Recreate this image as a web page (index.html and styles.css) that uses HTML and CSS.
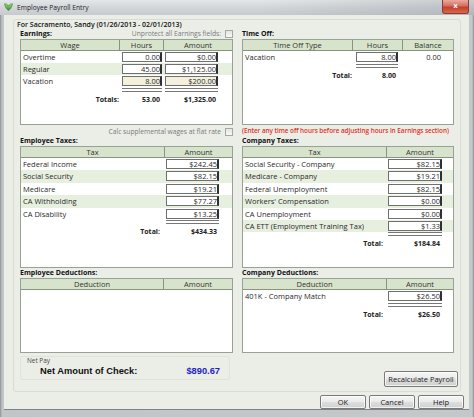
FILE: index.html
```html
<!DOCTYPE html>
<html>
<head>
<meta charset="utf-8">
<title>Employee Payroll Entry</title>
<link rel="stylesheet" href="styles.css">
</head>
<body>
<div class="window">
  <div class="titlebar">
    <svg class="app-icon" width="9" height="8" viewBox="0 0 9 8">
      <defs><linearGradient id="lg" x1="0" y1="0" x2="0" y2="1"><stop offset="0" stop-color="#9fe07a"/><stop offset="1" stop-color="#2f8a1c"/></linearGradient></defs>
      <path d="M0.5 0.8 C2 0.6 3.5 1.4 4.5 3 C5.5 1.4 7 0.6 8.5 0.8 C8 3.8 6.5 6.2 4.5 7.6 C2.5 6.2 1 3.8 0.5 0.8 Z" fill="url(#lg)" stroke="#2a6e1a" stroke-width="0.5"/>
    </svg>
    <span class="title">Employee Payroll Entry</span>
    <div class="close">x</div>
  </div>
  <div class="frame">
    <div class="client">
      <div class="panel">
        <div class="heading">For Sacramento, Sandy (01/26/2013 - 02/01/2013)</div>
        <div class="sections">

          <div class="section">
            <div class="label-row">
              <span class="label">Earnings:</span>
              <span class="hint">Unprotect all Earnings fields:<span class="check"></span></span>
            </div>
            <div class="box box-a earnings">
              <div class="grid hdr"><div>Wage</div><div>Hours</div><div>Amount</div></div>
              <div class="grid row"><div class="txt">Overtime</div><div><div class="inp i-h">0.00</div></div><div><div class="inp i-a">$0.00</div></div></div>
              <div class="grid row alt"><div class="txt">Regular</div><div><div class="inp i-h">45.00</div></div><div><div class="inp i-a">$1,125.00</div></div></div>
              <div class="grid row"><div class="txt">Vacation</div><div><div class="inp i-h beige">8.00</div></div><div><div class="inp i-a beige">$200.00</div></div></div>
              <div class="grid dbl"><div></div><div><div class="dl i-h"></div></div><div><div class="dl i-a"></div></div></div>
              <div class="grid tot"><div class="tl">Totals:</div><div><div class="tv i-h">53.00</div></div><div><div class="tv i-a">$1,325.00</div></div></div>
            </div>
          </div>

          <div class="section">
            <div class="label-row"><span class="label">Time Off:</span></div>
            <div class="box box-a timeoff">
              <div class="grid hdr"><div>Time Off Type</div><div>Hours</div><div>Balance</div></div>
              <div class="grid row"><div class="txt">Vacation</div><div><div class="inp i-h">8.00</div></div><div class="bal">0.00</div></div>
              <div class="grid dbl"><div></div><div><div class="dl i-h"></div></div><div></div></div>
              <div class="grid tot"><div class="tl">Total:</div><div><div class="tv i-h">8.00</div></div><div></div></div>
            </div>
          </div>

          <div class="note-row calc"><span class="hint">Calc supplemental wages at flat rate</span><span class="check"></span></div>
          <div class="note-row warn">(Enter any time off hours before adjusting hours in Earnings section)</div>

          <div class="section">
            <div class="label-row"><span class="label">Employee Taxes:</span></div>
            <div class="box box-b taxes emp">
              <div class="grid hdr"><div>Tax</div><div>Amount</div></div>
              <div class="grid row"><div class="txt">Federal Income</div><div><div class="inp i-a">$242.45</div></div></div>
              <div class="grid row alt"><div class="txt">Social Security</div><div><div class="inp i-a">$82.15</div></div></div>
              <div class="grid row"><div class="txt">Medicare</div><div><div class="inp i-a">$19.21</div></div></div>
              <div class="grid row alt"><div class="txt">CA Withholding</div><div><div class="inp i-a">$77.27</div></div></div>
              <div class="grid row"><div class="txt">CA Disability</div><div><div class="inp i-a">$13.25</div></div></div>
              <div class="grid dbl"><div></div><div><div class="dl i-a"></div></div></div>
              <div class="grid tot"><div class="tl">Total:</div><div><div class="tv i-a">$434.33</div></div></div>
            </div>
          </div>

          <div class="section">
            <div class="label-row"><span class="label">Company Taxes:</span></div>
            <div class="box box-b taxes comp">
              <div class="grid hdr"><div>Tax</div><div>Amount</div></div>
              <div class="grid row"><div class="txt">Social Security - Company</div><div><div class="inp i-a">$82.15</div></div></div>
              <div class="grid row alt"><div class="txt">Medicare - Company</div><div><div class="inp i-a">$19.21</div></div></div>
              <div class="grid row"><div class="txt">Federal Unemployment</div><div><div class="inp i-a">$82.15</div></div></div>
              <div class="grid row alt"><div class="txt">Workers' Compensation</div><div><div class="inp i-a">$0.00</div></div></div>
              <div class="grid row"><div class="txt">CA Unemployment</div><div><div class="inp i-a">$0.00</div></div></div>
              <div class="grid row alt"><div class="txt">CA ETT (Employment Training Tax)</div><div><div class="inp i-a">$1.33</div></div></div>
              <div class="grid dbl"><div></div><div><div class="dl i-a"></div></div></div>
              <div class="grid tot"><div class="tl">Total:</div><div><div class="tv i-a">$184.84</div></div></div>
            </div>
          </div>

          <div class="section">
            <div class="label-row"><span class="label">Employee Deductions:</span></div>
            <div class="box box-c ded emp">
              <div class="grid hdr"><div>Deduction</div><div>Amount</div></div>
            </div>
          </div>

          <div class="section">
            <div class="label-row"><span class="label">Company Deductions:</span></div>
            <div class="box box-c ded comp">
              <div class="grid hdr"><div>Deduction</div><div>Amount</div></div>
              <div class="grid row"><div class="txt">401K - Company Match</div><div><div class="inp i-a">$26.50</div></div></div>
              <div class="grid dbl"><div></div><div><div class="dl i-a"></div></div></div>
              <div class="grid tot"><div class="tl">Total:</div><div><div class="tv i-a">$26.50</div></div></div>
            </div>
          </div>
        </div>

        <div class="bottom">
          <div class="netpay">
            <div class="np-label">Net Pay</div>
            <div class="np-line"><span class="np-title">Net Amount of Check:</span><span class="np-value">$890.67</span></div>
          </div>
          <button class="btn recalc">Recalculate Payroll</button>
        </div>
      </div>
      <div class="actions">
        <button class="btn act">OK</button>
        <button class="btn act">Cancel</button>
        <button class="btn act">Help</button>
      </div>
    </div>
  </div>
</div>
</body>
</html>
```

FILE: styles.css
```css
* { box-sizing: border-box; }
html, body { margin: 0; padding: 0; }
body {
  width: 474px;
  height: 417px;
  overflow: hidden;
  font-family: "Open Sans", "Noto Sans", sans-serif;
  font-size: 7.5px;
  color: #2b2b2b;
  background: #b9bec1;
}
.window {
  width: 474px;
  height: 417px;
  display: flex;
  flex-direction: column;
  background: #b4b9bc;
}
.titlebar {
  height: 15px;
  flex: none;
  display: flex;
  align-items: center;
  position: relative;
  background:
    linear-gradient(90deg, rgba(255,255,255,0) 55%, rgba(80,90,100,0.18) 100%),
    linear-gradient(#e4e7e9, #d2d6d9 50%, #c6cbcf);
}
.app-icon { margin-left: 4px; margin-top: -1px; }
.title {
  margin-left: 4px;
  font-size: 6.7px;
  color: #1e1e1e;
  line-height: 10px;
}
.close {
  position: absolute;
  right: 5px;
  top: 0;
  width: 27px;
  height: 14px;
  border: 1px solid #8a3c30;
  border-top: none;
  border-radius: 0 0 3px 3px;
  background: linear-gradient(#eaa99d, #d2705e 45%, #c1402a 55%, #d86a4e);
  color: #fff;
  font-weight: 700;
  font-size: 7px;
  line-height: 12px;
  text-align: center;
  font-family: "DejaVu Sans", sans-serif;
}
.frame {
  flex: 1;
  display: flex;
  flex-direction: column;
  padding: 0 5px 7px 4px;
  background: linear-gradient(90deg, #8b9093 0, #c1c5c7 2px, #c4c8ca calc(100% - 2px), #8b9093 100%);
}
.client {
  flex: 1;
  background: #ebeee7;
  display: flex;
  flex-direction: column;
  border-bottom: 1px solid #7d8285;
}
.panel {
  margin: 4px 8px 0 9px;
  height: 373px;
  border: 1px solid #d9dcd4;
  border-radius: 3px;
  padding: 0 0 0 3px;
}
.heading {
  font-weight: 600;
  font-size: 7px;
  line-height: 9px;
  color: #111;
  white-space: nowrap;
}
.sections {
  display: grid;
  grid-template-columns: 213px 212px;
  column-gap: 9px;
  padding-left: 3px;
}
.label-row {
  height: 10px;
  display: flex;
  justify-content: space-between;
  align-items: center;
}
.label {
  font-weight: 700;
  font-size: 7px;
  line-height: 10px;
  color: #111;
}
.hint {
  font-size: 6.7px;
  color: #7a7a7a;
  display: flex;
  align-items: center;
  line-height: 10px;
}
.check {
  display: inline-block;
  width: 8px;
  height: 8px;
  border: 1px solid #a4a8a4;
  background: linear-gradient(#e4e6e2, #f7f8f6);
  margin-left: 4px;
}
.note-row {
  height: 11px;
  display: flex;
  align-items: center;
}
.note-row.calc { justify-content: flex-end; padding-top: 2px; }
.note-row.warn {
  font-size: 6.4px;
  font-weight: 600;
  color: #e2301c;
  white-space: nowrap;
  letter-spacing: -0.05px;
}
.box {
  border: 1px solid #98a294;
  background: #fff;
  overflow: hidden;
}
.box-a { height: 86px; }
.box-b { height: 122px; }
.box-c { height: 75px; }

.grid { display: grid; }
.earnings .grid { grid-template-columns: 99px 44px 1fr; }
.timeoff .grid { grid-template-columns: 110px 50px 1fr; }
.taxes .grid, .ded.comp .grid { grid-template-columns: 144px 1fr; }
.ded.emp .grid { grid-template-columns: 143px 1fr; }

.hdr {
  height: 11px;
  background: #d7e3cb;
  border-bottom: 1px solid #86957f;
}
.hdr > div {
  text-align: center;
  line-height: 10px;
  color: #333;
  border-right: 1px solid #86957f;
}
.hdr > div:last-child { border-right: none; }

.row { height: 12px; }
.taxes .row { height: 12.4px; }
.row.alt { background: #e7efdf; }
.txt {
  padding-left: 2px;
  line-height: 12px;
  white-space: nowrap;
  color: #2a2a2a;
}
.inp {
  height: 10px;
  margin-top: 1px;
  border: 1px solid #6f6f6f;
  border-right: 2px solid #303030;
  background: #fff;
  text-align: right;
  line-height: 8px;
  padding-right: 0;
  color: #2a2a2a;
}
.inp.beige { background: #f3f1dc; }

.earnings .i-h { margin-left: 2px; width: 40px; }
.earnings .i-a { margin-left: 1px; width: 53px; }
.timeoff .i-h { margin-left: 3px; width: 42px; }
.taxes.emp .i-a { margin-left: 1px; width: 53px; }
.taxes.comp .i-a, .ded.comp .i-a { margin-left: 1px; width: 54px; }

.bal {
  text-align: right;
  padding-right: 12px;
  line-height: 12px;
}
.dbl { height: 5px; }
.dl {
  height: 4px;
  margin-top: 1px;
  border-top: 1px solid #777;
  border-bottom: 1px solid #777;
}
.taxes .dbl .dl { margin-top: 0; }
.tot { margin-top: 3px; }
.tl, .tv {
  font-weight: 700;
  font-size: 7px;
  line-height: 10px;
  text-align: right;
  color: #222;
}
.tl { padding-right: 1px; }
.tv { padding-right: 2px; }
.taxes.emp .tl { padding-right: 5px; }
.taxes.comp .tl, .ded.comp .tl { padding-right: 4px; }
.taxes .tot { margin-top: 2px; }

.bottom {
  display: flex;
  justify-content: space-between;
  align-items: flex-start;
  padding: 0 2px 0 3px;
}
.netpay {
  margin-top: 3px;
  width: 210px;
  height: 24px;
  border: 1px solid #e0e3dc;
  border-radius: 2px;
}
.np-label {
  font-size: 6.4px;
  line-height: 8px;
  color: #444;
  padding-left: 6px;
}
.np-line {
  display: flex;
  justify-content: space-between;
  padding: 0 9px 0 19px;
  line-height: 12px;
  font-family: "Liberation Sans", Arial, sans-serif;
  font-weight: 700;
  font-size: 9.3px;
}
.np-title { color: #111; }
.np-value { color: #2323c8; }

.btn {
  font-family: "Open Sans", "Noto Sans", sans-serif;
  font-size: 7.5px;
  color: #222;
  border: 1px solid #7a7a7a;
  border-radius: 2px;
  background: linear-gradient(#f4f4f4, #ececec 45%, #dcdcdc 55%, #d0d0d0);
  box-shadow: inset 0 0 0 1px rgba(255,255,255,0.7);
  padding: 0;
  line-height: 12px;
}
.recalc {
  margin-top: 18px;
  width: 74px;
  height: 16px;
}
.actions {
  display: flex;
  justify-content: flex-end;
  gap: 3px;
  padding-right: 5px;
  margin-top: 3px;
}
.act {
  width: 46px;
  height: 14px;
}
```
